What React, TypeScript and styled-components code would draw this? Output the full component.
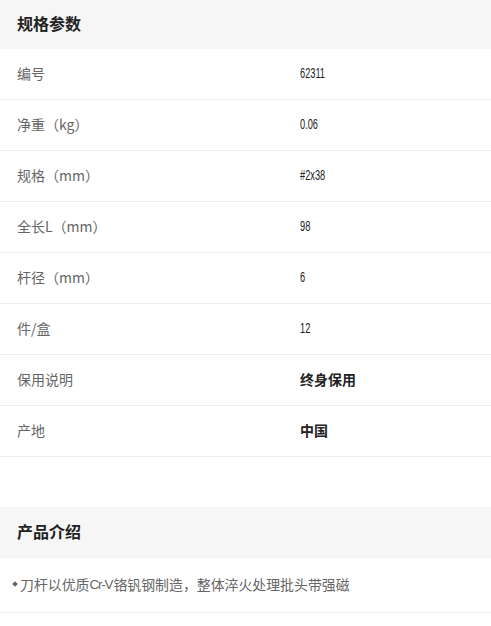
import React from "react";
import styled, { createGlobalStyle } from "styled-components";

const GlobalStyle = createGlobalStyle`
  html, body {
    margin: 0;
    padding: 0;
    background: #ffffff;
  }
  body {
    font-family: "Noto Sans CJK SC", "Noto Sans", sans-serif;
    -webkit-font-smoothing: antialiased;
  }
`;

const Page = styled.div`
  display: flex;
  flex-direction: column;
  width: 491px;
`;

const Section = styled.section<{ $gap?: number }>`
  display: flex;
  flex-direction: column;
  margin-top: ${(p) => p.$gap ?? 0}px;
`;

const SectionHeader = styled.div<{ $h: number }>`
  display: flex;
  align-items: center;
  box-sizing: border-box;
  height: ${(p) => p.$h}px;
  padding: 0 17px 4px;
  background: #f6f6f6;
  font-family: "Noto Sans CJK SC", sans-serif;
  font-weight: 700;
  font-size: 16px;
  color: #222222;
`;

const SpecRow = styled.div`
  display: grid;
  grid-template-columns: 283px 1fr;
  align-items: center;
  box-sizing: border-box;
  height: 51px;
  padding: 0 0 3px 17px;
  border-bottom: 1px solid #ececec;
`;

const Label = styled.span`
  font-family: "Noto Sans CJK SC", sans-serif;
  font-size: 14px;
  color: #666666;
`;

const Value = styled.span`
  display: inline-block;
  justify-self: start;
  font-family: "Liberation Sans", "Noto Sans CJK SC", sans-serif;
  font-size: 14px;
  color: #222222;
  transform: scaleX(0.66);
  transform-origin: left center;
`;

const StrongValue = styled.span`
  font-family: "Noto Sans CJK SC", sans-serif;
  font-size: 14px;
  font-weight: 700;
  color: #222222;
`;

const DescRow = styled.div`
  display: flex;
  align-items: center;
  box-sizing: border-box;
  height: 55px;
  padding: 0 0 2px 12px;
  border-bottom: 1px solid #ececec;
  font-family: "Noto Sans CJK SC", sans-serif;
  font-size: 13.9px;
  color: #666666;
  white-space: nowrap;
`;

const Bullet = styled.span`
  display: inline-block;
  width: 4px;
  height: 4px;
  margin: 0 3px 0 1px;
  background: #666666;
  transform: rotate(45deg);
`;

const Latin = styled.span`
  font-family: "Liberation Sans", sans-serif;
  font-size: 13.5px;
  letter-spacing: -1.2px;
  padding-right: 1px;
`;

const specs: { label: string; value: string; bold?: boolean }[] = [
  { label: "编号", value: "62311" },
  { label: "净重（kg）", value: "0.06" },
  { label: "规格（mm）", value: "#2x38" },
  { label: "全长L（mm）", value: "98" },
  { label: "杆径（mm）", value: "6" },
  { label: "件/盒", value: "12" },
  { label: "保用说明", value: "终身保用", bold: true },
  { label: "产地", value: "中国", bold: true },
];

export default function App() {
  return (
    <Page>
      <GlobalStyle />
      <Section>
        <SectionHeader $h={49}>规格参数</SectionHeader>
        {specs.map((s) => (
          <SpecRow key={s.label}>
            <Label>{s.label}</Label>
            {s.bold ? <StrongValue>{s.value}</StrongValue> : <Value>{s.value}</Value>}
          </SpecRow>
        ))}
      </Section>
      <Section $gap={50}>
        <SectionHeader $h={51}>产品介绍</SectionHeader>
        <DescRow>
          <Bullet />
          刀杆以优质<Latin>Cr-V</Latin>铬钒钢制造，整体淬火处理批头带强磁
        </DescRow>
      </Section>
    </Page>
  );
}
